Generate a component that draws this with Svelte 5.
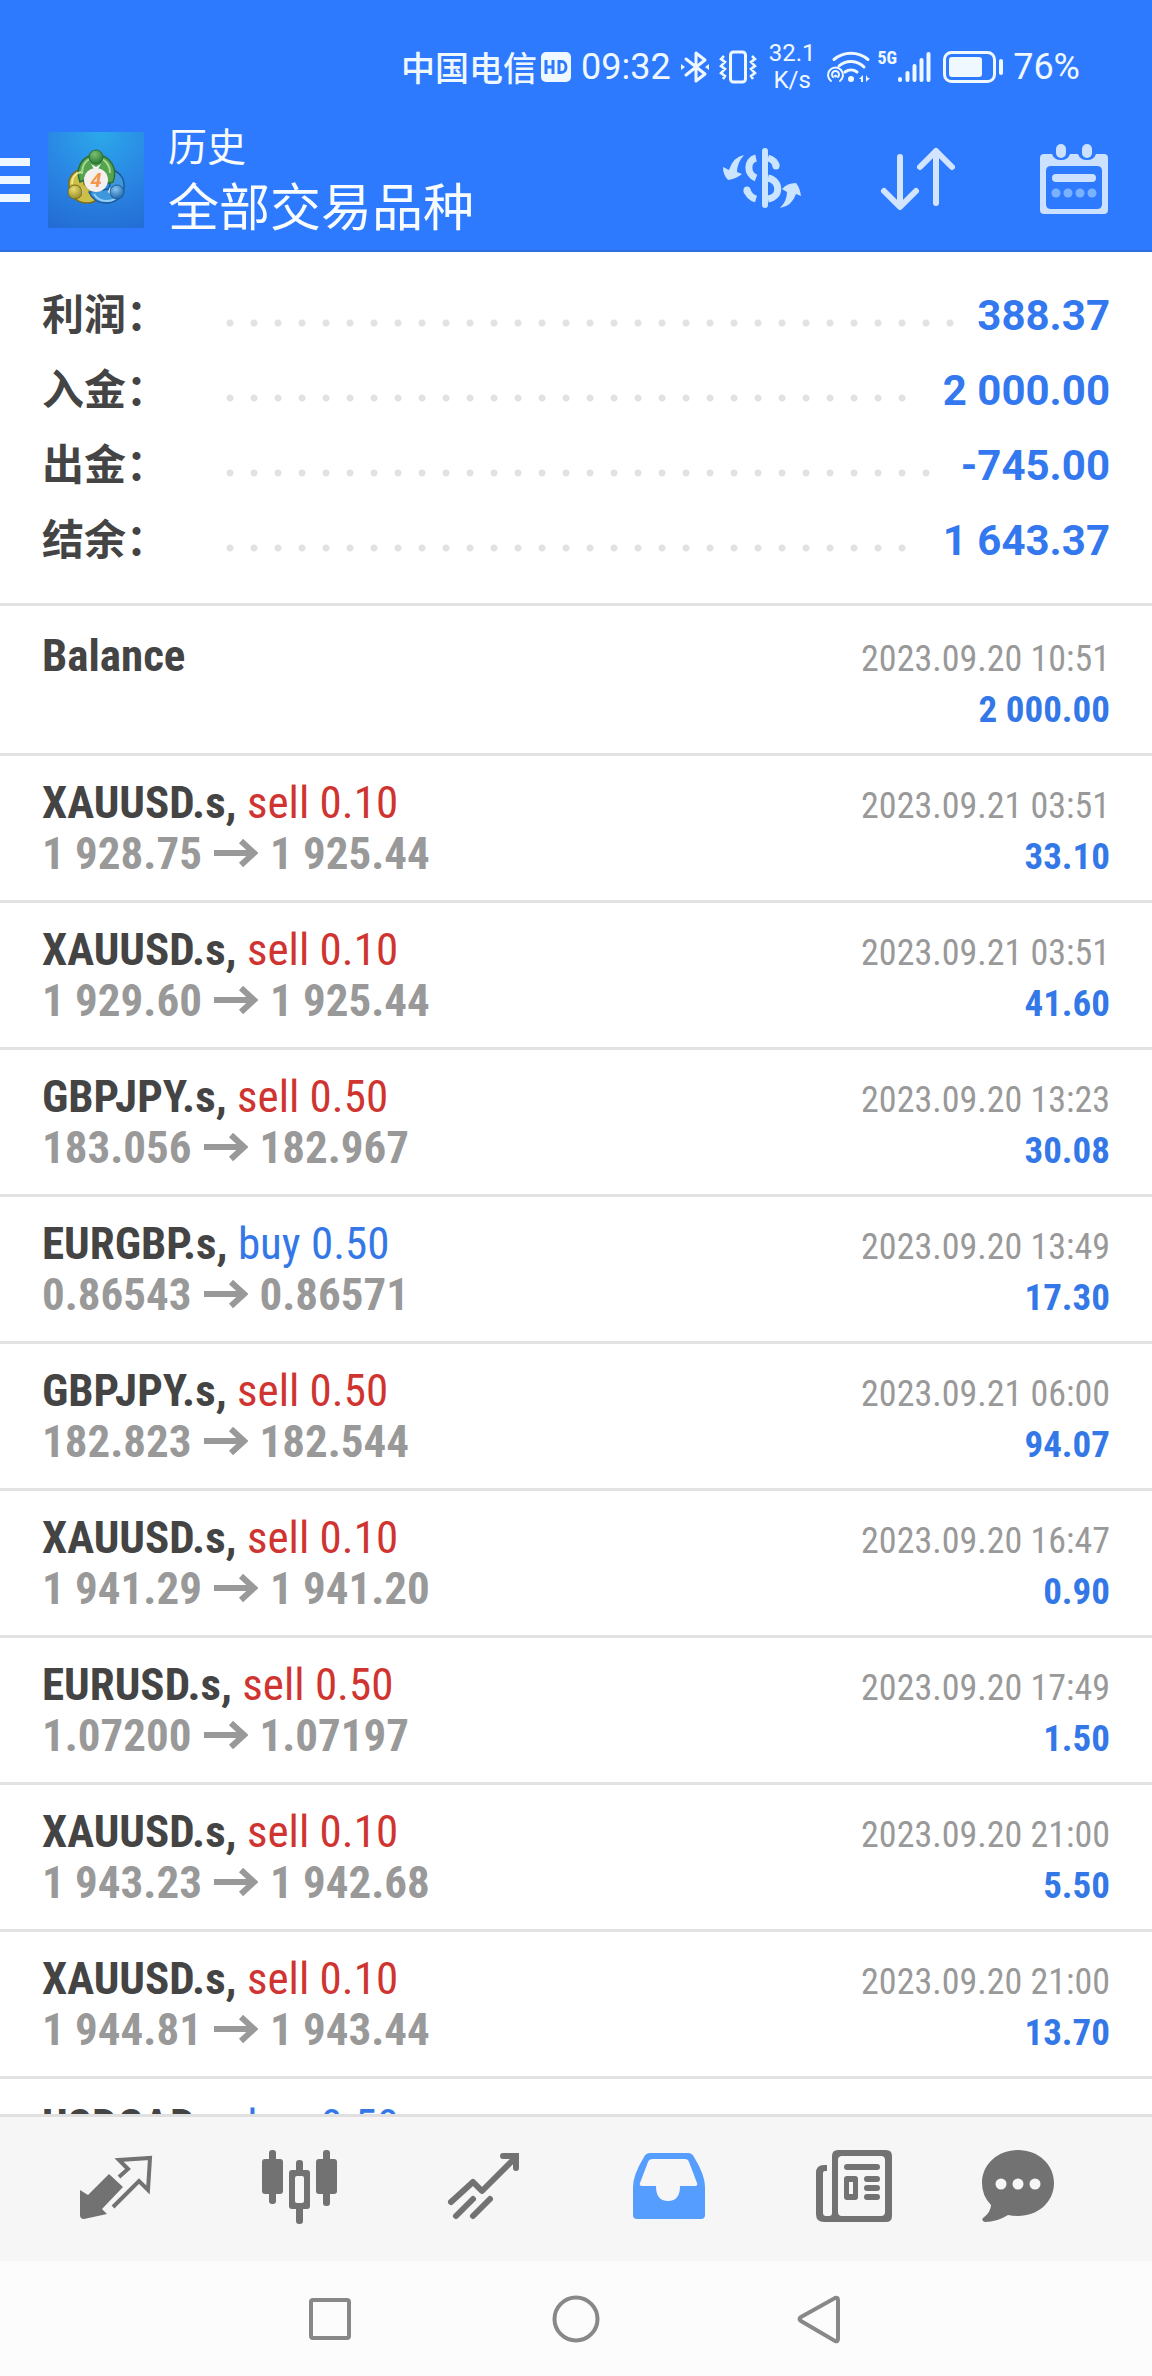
<script>
    const summary = [
        { label: '利润：', value: '388.37' },
        { label: '入金：', value: '2 000.00' },
        { label: '出金：', value: '-745.00' },
        { label: '结余：', value: '1 643.37' },
    ];

    const deals = [
        { symbol: 'Balance', time: '2023.09.20 10:51', profit: '2 000.00' },
        { symbol: 'XAUUSD.s', type: 'sell', volume: '0.10', open: '1 928.75', close: '1 925.44', time: '2023.09.21 03:51', profit: '33.10' },
        { symbol: 'XAUUSD.s', type: 'sell', volume: '0.10', open: '1 929.60', close: '1 925.44', time: '2023.09.21 03:51', profit: '41.60' },
        { symbol: 'GBPJPY.s', type: 'sell', volume: '0.50', open: '183.056', close: '182.967', time: '2023.09.20 13:23', profit: '30.08' },
        { symbol: 'EURGBP.s', type: 'buy', volume: '0.50', open: '0.86543', close: '0.86571', time: '2023.09.20 13:49', profit: '17.30' },
        { symbol: 'GBPJPY.s', type: 'sell', volume: '0.50', open: '182.823', close: '182.544', time: '2023.09.21 06:00', profit: '94.07' },
        { symbol: 'XAUUSD.s', type: 'sell', volume: '0.10', open: '1 941.29', close: '1 941.20', time: '2023.09.20 16:47', profit: '0.90' },
        { symbol: 'EURUSD.s', type: 'sell', volume: '0.50', open: '1.07200', close: '1.07197', time: '2023.09.20 17:49', profit: '1.50' },
        { symbol: 'XAUUSD.s', type: 'sell', volume: '0.10', open: '1 943.23', close: '1 942.68', time: '2023.09.20 21:00', profit: '5.50' },
        { symbol: 'XAUUSD.s', type: 'sell', volume: '0.10', open: '1 944.81', close: '1 943.44', time: '2023.09.20 21:00', profit: '13.70' },
        { symbol: 'USDCAD.s', type: 'buy', volume: '0.50' },
    ];

    let activeTab = $state('history');
</script>

<div class="screen">
    <header>
        <div class="status">
            <span class="carrier">中国电信</span>
            <svg class="hd" width="30" height="30" viewBox="0 0 30 30">
                <rect width="30" height="30" rx="5" fill="#f0f8ff" />
                <path d="M5 8v14M12 8v14M5 15h7M18 9.500v11h2.500a4.500 5.500 0 0 0 0-11z" fill="none" stroke="#2e7aff" stroke-width="3" />
            </svg>
            <span class="clock">09:32</span>
            <svg class="bluetooth" width="28" height="34" viewBox="0 0 28 34">
                <path d="M5 9l19 15-9 7V3l9 7L5 25" fill="none" stroke="#f0f8ff" stroke-width="3" stroke-linejoin="round" stroke-linecap="round" />
                <path d="M0 14l4 3-4 3zM28 14l-4 3 4 3z" fill="#f0f8ff" />
            </svg>
            <svg class="vibrate" width="38" height="34" viewBox="0 0 38 34">
                <g fill="none" stroke="#f0f8ff" stroke-width="3">
                    <rect x="11.500" y="2" width="15" height="30" rx="3" />
                    <path d="M5 6L2 9l4 3-4 4 4 3-4 4 4 3-2 3M33 6l3 3-4 3 4 4-4 3 4 4-4 3 2 3" stroke-width="2.500" />
                </g>
            </svg>
            <span class="speed">32.1<br />K/s</span>
            <svg class="wifi" width="46" height="34" viewBox="0 0 46 34">
                <g fill="none" stroke="#f0f8ff" stroke-width="3" stroke-linecap="round">
                    <path d="M8 9.500a26 26 0 0 1 34 0M13 16a18 18 0 0 1 25 1M19 22a10 10 0 0 1 12 0" />
                    <path d="M5 31a7.500 7.500 0 1 1 9 0M7 27a3.500 3.500 0 1 1 5 0" stroke-width="2" />
                </g>
                <circle cx="9.500" cy="26" r="1.500" fill="#f0f8ff" />
                <circle cx="25" cy="29" r="3" fill="#f0f8ff" />
                <path d="M37 25v7h-2v-3h-2zM40 25v7l4-4h-2z" fill="#f0f8ff" />
            </svg>
            <span class="network">5G</span>
            <svg class="signal" width="34" height="32" viewBox="0 0 34 32">
                <path d="M3 28v1M10.500 22v7M17.500 15v14M24.500 9v20M31.500 3v26" stroke="#f0f8ff" stroke-width="4" stroke-linecap="round" />
            </svg>
            <svg class="battery" width="60" height="34" viewBox="0 0 60 34">
                <rect x="1.500" y="2.500" width="50" height="29" rx="7" fill="none" stroke="#f0f8ff" stroke-width="3" />
                <rect x="6" y="7" width="33" height="20" rx="3" fill="#f0f8ff" />
                <rect x="56" y="9" width="4" height="16" rx="2" fill="#f0f8ff" />
            </svg>
            <span class="charge">76%</span>
        </div>

        <div class="appbar">
            <button class="menu" aria-label="Menu">
                <span></span>
                <span></span>
                <span></span>
            </button>
            <svg class="logo" viewBox="0 0 96 96">
                <defs>
                    <radialGradient id="sky" cx="55%" cy="0%" r="110%">
                        <stop offset="0" stop-color="#2ba9ea" />
                        <stop offset="0.500" stop-color="#2a88e4" />
                        <stop offset="1" stop-color="#236cd4" />
                    </radialGradient>
                    <radialGradient id="green" cx="40%" cy="30%" r="70%">
                        <stop offset="0" stop-color="#7cc070" />
                        <stop offset="1" stop-color="#2b7a36" />
                    </radialGradient>
                    <radialGradient id="yellow" cx="40%" cy="30%" r="70%">
                        <stop offset="0" stop-color="#eadf72" />
                        <stop offset="1" stop-color="#998a28" />
                    </radialGradient>
                    <radialGradient id="blue" cx="40%" cy="30%" r="70%">
                        <stop offset="0" stop-color="#86c4f2" />
                        <stop offset="1" stop-color="#2167ad" />
                    </radialGradient>
                </defs>
                <rect width="96" height="96" fill="url(#sky)" />
                <g stroke-width="1.500">
                    <path d="M34 37c-9 2-14 9-13 17 1 10 8 17 18 17 5 0 9-2 11-5L36 52z" fill="#cdbf45" stroke="#796d20" />
                    <path d="M65 38c8 3 12 10 11 18-2 10-9 15-18 15-8 0-14-4-17-11l20-3z" fill="#3f97dc" stroke="#1d5999" />
                    <path d="M32 50c-5-13 1-27 16-27s22 14 17 27l-8 2-8-13-8 7z" fill="#56a34e" stroke="#286e35" />
                </g>
                <g fill="none" stroke-width="2" opacity="0.800">
                    <path d="M24 52c0-7 4-11 9-12" stroke="#fff2a0" />
                    <path d="M46 62c3 5 7 7 12 7 9 0 14-5 15-12" stroke="#a6dcff" />
                    <path d="M34 42c0-10 5-16 14-16s14 7 14 15" stroke="#b9e7a9" />
                </g>
                <path d="M43 32l5 3 5-3-3 5h-4zM34 55l1 6-4 4M62 55l-2 5 4 4" fill="#f4fbff" />
                <circle cx="48" cy="25" r="7" fill="url(#green)" stroke="#286e35" />
                <circle cx="27" cy="60" r="7" fill="url(#yellow)" stroke="#796d20" />
                <circle cx="69" cy="60" r="7" fill="url(#blue)" stroke="#1d5999" />
                <circle cx="48" cy="48" r="12" fill="#f3f0ef" />
                <text x="48" y="55" text-anchor="middle" font-family="Roboto, sans-serif" font-size="20" font-weight="700" font-style="italic" fill="#f2964a">4</text>
            </svg>
            <div class="titles">
                <span class="subtitle">历史</span>
                <h1>全部交易品种</h1>
            </div>
            <button class="action" aria-label="Symbol">
                <svg viewBox="0 0 96 96">
                    <g fill="none" stroke="#cbe5ff" stroke-width="7">
                        <path d="M42 26C33 28 32 42 42 46" />
                        <path d="M54 26Q61 28 62 34" />
                        <path d="M54 46C67 49 67 65 54 67" />
                        <path d="M33 58Q35 65 42 67" />
                        <path d="M62 33v1M33 58v1" stroke-linecap="round" />
                        <path d="M51 19v54" stroke-width="6" stroke-linecap="round" />
                    </g>
                    <path d="M30 23Q19 25 15 38L9 35Q9 43 14 48Q22 47 28 42L23 40Q23 31 30 23zM66 76Q73 69 73 60L68 57Q73 51 82 51Q86 56 87 64L82 62Q78 74 66 76z" fill="#cbe5ff" />
                </svg>
            </button>
            <button class="action" aria-label="Sort">
                <svg viewBox="0 0 96 96">
                    <path d="M30 25v49M14 59l16 16 16-16M66 71V19M50 35l16-16 16 16" fill="none" stroke="#d3e4ff" stroke-width="6" stroke-linecap="round" stroke-linejoin="round" />
                </svg>
            </button>
            <button class="action" aria-label="Period">
                <svg viewBox="0 0 96 96">
                    <path fill-rule="evenodd" d="M18 22h8q2 6 9 6t9-6h8q2 6 9 6t9-6h8q4 0 4 4v52q0 4-4 4H18q-4 0-4-4V26q0-4 4-4zM25 34q-5 0-5 5v33q0 5 5 5h46q5 0 5-5V39q0-5-5-5z" fill="#cbe1ff" />
                    <rect x="30" y="12" width="10" height="14" rx="5" fill="#cbe1ff" />
                    <rect x="56" y="12" width="10" height="14" rx="5" fill="#cbe1ff" />
                    <rect x="26" y="42" width="44" height="8" rx="4" fill="#cbe1ff" />
                    <g fill="#79b2ff">
                        <circle cx="30" cy="61" r="4.500" />
                        <circle cx="42" cy="61" r="4.500" />
                        <circle cx="54" cy="61" r="4.500" />
                        <circle cx="66" cy="61" r="4.500" />
                    </g>
                </svg>
            </button>
        </div>
    </header>

    <main>
        <dl class="summary">
            {#each summary as item}
                <div class="total">
                    <dt>{item.label}</dt>
                    <dd class="leader"><div class="dots"></div></dd>
                    <dd>{item.value}</dd>
                </div>
            {/each}
        </dl>

        <ul class="deals">
            {#each deals as deal}
                <li>
                    <div class="line">
                        <span class="symbol">
                            {deal.symbol}{#if deal.type}, <span class={deal.type}>{deal.type} {deal.volume}</span>{/if}
                        </span>
                        {#if deal.time}<time>{deal.time}</time>{/if}
                    </div>
                    <div class="line">
                        <span class="prices">
                            {#if deal.open}
                                {deal.open}<svg class="arrow" width="44" height="30" viewBox="0 0 44 30"><path d="M0 14h40M27 2l13 12-13 12" fill="none" stroke="currentColor" stroke-width="6" /></svg>{deal.close}
                            {/if}
                        </span>
                        <span class="profit">{deal.profit}</span>
                    </div>
                </li>
            {/each}
        </ul>
    </main>

    <nav class="tabs">
        <button class:active={activeTab === 'quotes'} onclick={() => (activeTab = 'quotes')} aria-label="Quotes">
            <svg viewBox="0 0 120 96">
                <path d="M24 49l8 5 21-21 14 13-21 22 5 5-23 5q-4 0-4-4z" fill="currentColor" />
                <path d="M63 36l9-8-9-9 31-2-2 32-9-9-26 26" fill="none" stroke="currentColor" stroke-width="4" />
            </svg>
        </button>
        <button class:active={activeTab === 'charts'} onclick={() => (activeTab = 'charts')} aria-label="Charts">
            <svg viewBox="0 0 120 96" fill="currentColor">
                <rect x="22" y="18" width="21" height="35" rx="3" />
                <rect x="29" y="9" width="7" height="54" rx="3" />
                <rect x="76" y="18" width="21" height="35" rx="3" />
                <rect x="83" y="9" width="7" height="56" rx="3" />
                <rect x="56" y="19" width="7" height="14" rx="3" />
                <rect x="56" y="64" width="7" height="19" rx="3" />
                <path fill-rule="evenodd" d="M52 29h15q3 0 3 3v33q0 3-3 3H52q-3 0-3-3V32q0-3 3-3zM57 35q-2 0-2 2v23q0 2 2 2h5q2 0 2-2V37q0-2-2-2z" />
            </svg>
        </button>
        <button class:active={activeTab === 'trade'} onclick={() => (activeTab = 'trade')} aria-label="Trade">
            <svg viewBox="0 0 120 96" fill="none" stroke="currentColor" stroke-width="6" stroke-linecap="round">
                <path d="M27 61l22-20 9 9 34-34" stroke-linejoin="round" />
                <path d="M79 15h13v12" stroke-linejoin="miter" />
                <path d="M32 75l17-17M49 75l17-17" />
            </svg>
        </button>
        <button class:active={activeTab === 'history'} onclick={() => (activeTab = 'history')} aria-label="History">
            <svg viewBox="0 0 120 96">
                <path fill="currentColor" fill-rule="evenodd" d="M42 12h38q4 0 6 4 11 18 11 30v28q0 4-4 4H29q-4 0-4-4V46q0-12 11-30 2-4 6-4zM45 18q-4 0-5 3l-8 21q-1 3 2 3h14q0 15 12 15t12-15h15q3 0 2-3l-8-21q-1-3-4-3z" />
            </svg>
        </button>
        <button class:active={activeTab === 'news'} onclick={() => (activeTab = 'news')} aria-label="News">
            <svg viewBox="0 0 120 96" fill="currentColor">
                <path fill-rule="evenodd" d="M46 9h48q6 0 6 6v60q0 6-6 6H32q-8 0-8-8V32q0-8 8-8h3v6h-2q-2 0-2 2v40q0 3 3 3h3q3 0 3-3V15q0-6 6-6zM50 15q-4 0-4 4v52q0 4 4 4h39q4 0 4-4V19q0-4-4-4z" />
                <rect x="52" y="23" width="36" height="6" rx="3" />
                <path fill-rule="evenodd" d="M55 35h8q3 0 3 3v18q0 3-3 3h-8q-3 0-3-3V38q0-3 3-3zM57 41v12h4V41z" />
                <rect x="72" y="35" width="16" height="6" rx="3" />
                <rect x="72" y="44" width="16" height="6" rx="3" />
                <rect x="72" y="53" width="16" height="6" rx="3" />
            </svg>
        </button>
        <button class:active={activeTab === 'messages'} onclick={() => (activeTab = 'messages')} aria-label="Messages">
            <svg viewBox="0 0 120 96" fill="currentColor">
                <path d="M42 9c20 0 36 14 36 33S62 75 42 75q-6 0-10-1-11 7-23 7-4-1-2-4 8-6 8-13Q6 55 6 42C6 23 22 9 42 9z" />
                <g fill="#f6f6f6">
                    <circle cx="25" cy="43" r="5.500" />
                    <circle cx="42" cy="43" r="5.500" />
                    <circle cx="59" cy="43" r="5.500" />
                </g>
            </svg>
        </button>
    </nav>

    <div class="system">
        <button aria-label="Recent apps">
            <svg viewBox="0 0 54 54"><rect x="8" y="8" width="38" height="38" rx="2" /></svg>
        </button>
        <button aria-label="Home">
            <svg viewBox="0 0 54 54"><circle cx="27" cy="27" r="21.500" /></svg>
        </button>
        <button aria-label="Back">
            <svg viewBox="0 0 54 54"><path d="M6 25L40 6q3-1 3 2v39q0 3-3 2L6 29q-3-2 0-4z" /></svg>
        </button>
    </div>
</div>

<style>
    :global(body) {
        background: #fff;
    }

    .screen {
        display: flex;
        flex-direction: column;
        height: 100vh;
        overflow: hidden;
        font-family: Roboto, "Noto Sans CJK SC", sans-serif;
        background: #fff;
    }

    button {
        display: flex;
        align-items: center;
        justify-content: center;
        padding: 0;
        border: 0;
        background: none;
        color: inherit;
        cursor: pointer;
    }

    svg {
        flex-shrink: 0;
    }

    header {
        flex-shrink: 0;
        color: #f8fcff;
        background: #2e7aff;
        box-shadow: inset 0 -2px #2b6fe0;
    }

    .status {
        display: flex;
        align-items: center;
        justify-content: flex-end;
        height: 108px;
        padding: 25px 72px 0 0;
        box-sizing: border-box;
        font-size: 36px;
        color: #f0f8ff;
    }

    .carrier {
        font-size: 34px;
        font-weight: 500;
    }

    .hd {
        margin: 0 10px 0 4px;
    }

    .bluetooth,
    .vibrate {
        margin-left: 10px;
    }

    .speed {
        margin: 0 10px 0 12px;
        font-size: 24px;
        line-height: 27px;
        text-align: center;
    }

    .network {
        margin: 0 0 18px 6px;
        font-family: "Roboto Condensed", "Liberation Sans Narrow", Roboto, sans-serif;
        font-size: 18px;
        font-weight: 700;
    }

    .battery {
        margin: 0 10px 0 12px;
    }

    .appbar {
        display: flex;
        align-items: center;
        height: 144px;
    }

    .menu {
        flex-direction: column;
        align-items: stretch;
        gap: 10px;
        width: 30px;
    }

    .menu span {
        height: 8px;
        background: #f0f8ff;
    }

    .logo {
        width: 96px;
        height: 96px;
        margin: 0 24px 0 18px;
    }

    .titles {
        flex: 1;
        padding-bottom: 6px;
        font-family: "Noto Sans CJK SC", sans-serif;
    }

    .subtitle {
        display: block;
        font-size: 39px;
        line-height: 54px;
    }

    h1 {
        margin: 0;
        font-size: 51px;
        font-weight: 400;
        line-height: 66px;
        white-space: nowrap;
    }

    .action {
        width: 156px;
        height: 100%;
    }

    .action svg {
        width: 96px;
        height: 96px;
    }

    main {
        flex: 1;
        min-height: 0;
        overflow: hidden;
    }

    .summary {
        margin: 0;
        padding: 26px 42px 25px;
        border-bottom: 3px solid #e2e2e2;
    }

    .total {
        display: flex;
        align-items: center;
        height: 75px;
        font-size: 42px;
        font-weight: 700;
        line-height: 75px;
        color: #3478f0;
    }

    dt {
        width: 176px;
        color: #444;
    }

    dd {
        margin: 0;
    }

    .leader {
        flex: 1;
        margin-right: 14px;
    }

    .dots {
        width: round(down, 100%, 24px);
        height: 24px;
        margin-top: 15px;
        background: radial-gradient(circle, #e2e2e2 3px, transparent 4px) 0 0 / 24px 24px;
    }

    .deals {
        margin: 0;
        padding: 0;
        list-style: none;
        font-family: "Roboto Condensed", "Liberation Sans Narrow", Roboto, sans-serif;
    }

    li {
        padding: 21px 42px;
        border-bottom: 3px solid #e2e2e2;
    }

    li:first-child {
        padding-top: 24px;
    }

    .line {
        display: flex;
        align-items: baseline;
        justify-content: space-between;
        height: 51px;
        font-size: 45px;
        font-weight: 700;
        line-height: 51px;
        white-space: nowrap;
    }

    .symbol {
        color: #444;
    }

    .sell,
    .buy {
        font-weight: 400;
    }

    .sell {
        color: #cf3430;
    }

    .buy {
        color: #3478e8;
    }

    .prices {
        color: #999;
    }

    /* keeps the baseline when a row has no prices */
    .prices::before {
        content: "\200b";
    }

    .arrow {
        margin: 0 12px;
    }

    time {
        font-size: 36px;
        font-weight: 400;
        color: #999;
    }

    .profit {
        font-size: 37px;
        color: #3478e8;
    }

    .tabs {
        display: flex;
        flex-shrink: 0;
        height: 144px;
        padding: 0 24px;
        border-top: 3px solid #e0e0e0;
        color: #727272;
        background: #f6f6f6;
    }

    .tabs button {
        flex: 1;
    }

    .tabs .active {
        color: #559dff;
    }

    .tabs svg {
        width: 120px;
        height: 96px;
    }

    .system {
        display: flex;
        flex-shrink: 0;
        justify-content: center;
        height: 115px;
        background: #fcfcfc;
    }

    .system button {
        width: 246px;
    }

    .system svg {
        width: 54px;
        height: 54px;
        fill: none;
        stroke: #888;
        stroke-width: 4px;
    }
</style>
